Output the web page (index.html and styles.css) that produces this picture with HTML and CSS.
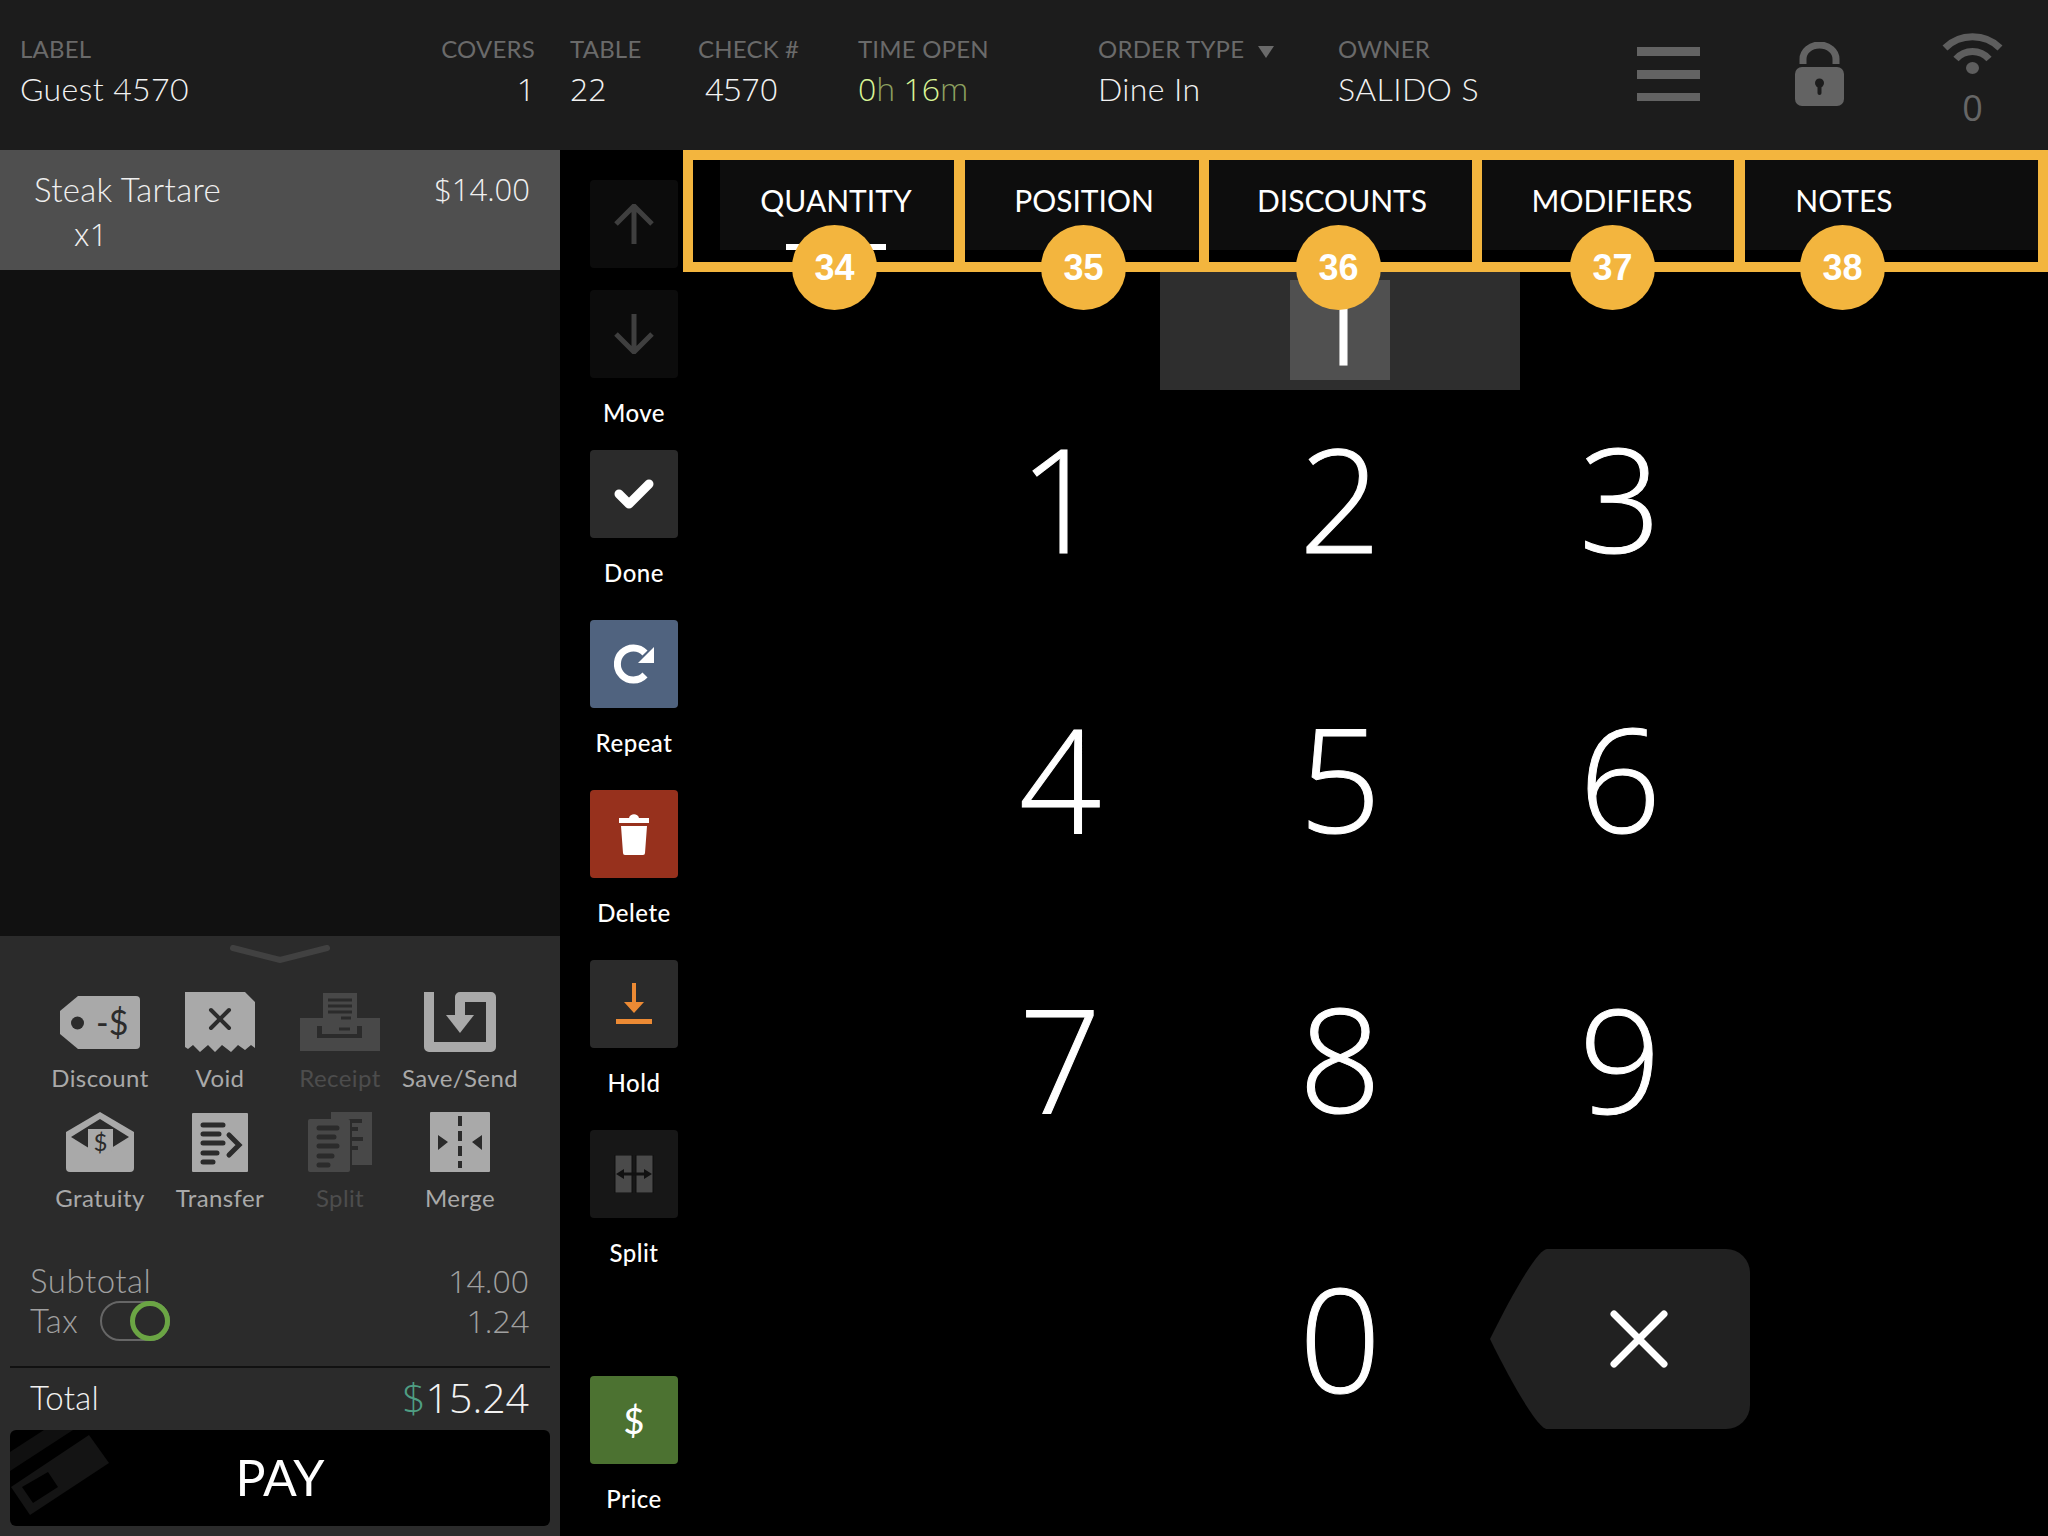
FILE: index.html
```html
<!DOCTYPE html>
<html lang="en">
<head>
<meta charset="utf-8">
<title>Order</title>
<link rel="stylesheet" href="styles.css">
</head>
<body>
<div class="app">
  <header class="top">
    <div class="col col-label"><div class="cap">LABEL</div><div class="val">Guest 4570</div></div>
    <div class="col col-covers"><div class="cap">COVERS</div><div class="val num">1</div></div>
    <div class="col col-table"><div class="cap">TABLE</div><div class="val num">22</div></div>
    <div class="col col-check"><div class="cap">CHECK #</div><div class="val num val-check">4570</div></div>
    <div class="col col-time"><div class="cap">TIME OPEN</div><div class="val num"><span class="lime">0</span><span class="olive">h</span> <span class="lime">16</span><span class="olive">m</span></div></div>
    <div class="col col-order"><div class="cap">ORDER TYPE<svg class="tri" width="16" height="12" viewBox="0 0 16 12"><path d="M0 0H16L8 12Z"/></svg></div><div class="val">Dine In</div></div>
    <div class="col col-owner"><div class="cap">OWNER</div><div class="val">SALIDO S</div></div>
    <svg class="ico-menu" width="63" height="54" viewBox="0 0 63 54"><path fill="#636363" d="M0 0H63V9H0ZM0 23H63V32H0ZM0 46H63V54H0Z"/></svg>
    <svg class="ico-lock" width="49" height="64" viewBox="0 0 49 64"><path d="M8 22V17a16.500 14 0 0 1 33 0V22" fill="none" stroke="#636363" stroke-width="7"/><rect y="25" width="49" height="39" rx="7" fill="#636363"/><circle cx="24.500" cy="41" r="4.500" fill="#1c1c1c"/><rect x="22.500" y="42" width="4" height="11" rx="2" fill="#1c1c1c"/></svg>
    <div class="wifi">
      <svg width="61" height="42" viewBox="0 0 61 42"><g fill="none" stroke="#5e5e5e" stroke-width="7"><path d="M3 15C18 0 43 0 58 15"/><path d="M14 26C23 16 38 16 47 26"/></g><ellipse cx="30.500" cy="35" rx="6.500" ry="6" fill="#5e5e5e"/></svg>
      <div class="wifi-n">0</div>
    </div>
  </header>

  <div class="main">
    <aside class="left">
      <div class="item">
        <div class="item-row"><span>Steak Tartare</span><span class="num item-price">$14.00</span></div>
        <div class="item-qty num">x1</div>
      </div>
      <div class="list"></div>
      <div class="panel">
        <svg class="chev" width="100" height="18" viewBox="0 0 100 18"><path d="M3 3L50 15L97 3" fill="none" stroke="#414141" stroke-width="6" stroke-linecap="round"/></svg>
        <div class="tools">
          <div class="tool">
            <div class="tool-ico"><svg width="80" height="53" viewBox="0 0 80 53"><path fill="#a9a9a9" d="M18 0H76a4 4 0 0 1 4 4V49a4 4 0 0 1-4 4H18L0 38V15Z"/><circle cx="17.500" cy="27" r="6.500" fill="#2b2b2b"/><text class="tag-t" x="36" y="39">-$</text></svg></div>
            <div class="tool-l">Discount</div>
          </div>
          <div class="tool">
            <div class="tool-ico"><svg width="70" height="60" viewBox="0 0 70 60"><path fill="#a9a9a9" d="M0 0H60L70 10V56L66 53L60 58L53 53L46 60L37 53L30 60L23 53L15 60L8 53L3 57L0 55Z"/><path d="M26 18L44 36M44 18L26 36" stroke="#2b2b2b" stroke-width="4" stroke-linecap="round"/></svg></div>
            <div class="tool-l">Void</div>
          </div>
          <div class="tool">
            <div class="tool-ico"><svg width="80" height="58" viewBox="0 0 80 58"><path fill="#484848" d="M23 0H57V25H80V58H0V25H23Z"/><path d="M28 7H52M28 13H52M28 19H52" stroke="#2b2b2b" stroke-width="3"/><path d="M41 25H51" stroke="#2b2b2b" stroke-width="3"/><path d="M17 33V45H62V33H57V41H22V33Z" fill="#2b2b2b"/><path d="M39 36H50" stroke="#2b2b2b" stroke-width="3"/></svg></div>
            <div class="tool-l tool-off">Receipt</div>
          </div>
          <div class="tool">
            <div class="tool-ico"><svg width="72" height="60" viewBox="0 0 72 60"><path d="M5 0V55H67V5H36V26" fill="none" stroke="#a9a9a9" stroke-width="10" stroke-linejoin="round"/><path fill="#a9a9a9" d="M22 23H50L36 41Z"/></svg></div>
            <div class="tool-l">Save/Send</div>
          </div>
          <div class="tool">
            <div class="tool-ico"><svg width="68" height="60" viewBox="0 0 68 60"><path fill="#a9a9a9" d="M34 0L68 20V56a4 4 0 0 1-4 4H4a4 4 0 0 1-4-4V20Z"/><path fill="#2b2b2b" d="M5 25L34 7L63 25L34 43Z"/><path fill="#a9a9a9" d="M22 17H47V38L34.500 45L22 38Z"/><text class="env-t" x="34.500" y="39">$</text></svg></div>
            <div class="tool-l">Gratuity</div>
          </div>
          <div class="tool">
            <div class="tool-ico"><svg width="56" height="59" viewBox="0 0 56 59"><rect width="56" height="59" rx="1" fill="#a9a9a9"/><path d="M11 12H31M11 21H27M11 30H31M11 40H25M11 49H21" stroke="#2b2b2b" stroke-width="5" stroke-linecap="round"/><path d="M37 22L47 32L37 42" fill="none" stroke="#2b2b2b" stroke-width="5" stroke-linecap="round"/></svg></div>
            <div class="tool-l">Transfer</div>
          </div>
          <div class="tool">
            <div class="tool-ico"><svg width="64" height="60" viewBox="0 0 64 60"><path fill="#484848" d="M23 0H64V53H44V7H23Z"/><path d="M44 9H54M44 17H50M44 27H55M44 36H50" stroke="#2b2b2b" stroke-width="4"/><rect y="7" width="42" height="53" rx="2" fill="#484848"/><path d="M11 16H29M11 25H26M11 34H29M11 44H24M11 53H20" stroke="#2b2b2b" stroke-width="5" stroke-linecap="round"/></svg></div>
            <div class="tool-l tool-off">Split</div>
          </div>
          <div class="tool">
            <div class="tool-ico"><svg width="60" height="60" viewBox="0 0 60 60"><rect width="60" height="60" rx="1" fill="#a9a9a9"/><path d="M30 4V56" stroke="#2b2b2b" stroke-width="4" stroke-dasharray="10 5"/><path fill="#2b2b2b" d="M8 23L18 30L8 38ZM52 23L42 30L52 38Z"/></svg></div>
            <div class="tool-l">Merge</div>
          </div>
        </div>
        <div class="sums">
          <div class="sum"><span>Subtotal</span><span class="num">14.00</span></div>
          <div class="sum"><span class="tax">Tax<span class="toggle"><span class="knob"></span></span></span><span class="num">1.24</span></div>
        </div>
        <div class="rule"></div>
        <div class="total"><span>Total</span><span class="grand num"><span class="usd">$</span>15.24</span></div>
        <button class="pay">
          <svg class="card" width="120" height="96" viewBox="0 0 120 96"><path fill="#101010" d="M0 22L34 0H63L0 41Z"/><path fill="#141414" d="M79 5L99 33L20 85L1 57Z"/><path fill="#000" d="M38 42L48 57L23 73L12 57Z"/></svg>
          <span class="pay-t">PAY</span>
        </button>
      </div>
    </aside>

    <nav class="actions">
      <div class="act"><div class="btn btn-dim"><svg width="40" height="40" viewBox="0 0 40 40"><path d="M20 40V2M2 20L20 2L38 20" fill="none" stroke="#3f3f3f" stroke-width="5"/></svg></div></div>
      <div class="act act-tight"><div class="btn btn-dim"><svg width="40" height="40" viewBox="0 0 40 40"><path d="M20 0V38M2 20L20 38L38 20" fill="none" stroke="#3f3f3f" stroke-width="5"/></svg></div><div class="act-l">Move</div></div>
      <div class="act act-tight"><div class="btn btn-dark"><svg width="40" height="32" viewBox="0 0 40 32"><path d="M5 16L15 26L35 6" fill="none" stroke="#fff" stroke-width="9" stroke-linecap="round" stroke-linejoin="round"/></svg></div><div class="act-l">Done</div></div>
      <div class="act"><div class="btn btn-blue"><svg width="40" height="40" viewBox="0 0 40 40"><path d="M31 9A16 16 0 1 0 31 31" fill="none" stroke="#fff" stroke-width="7"/><path fill="#fff" d="M40 3V19H24Z"/></svg></div><div class="act-l">Repeat</div></div>
      <div class="act"><div class="btn btn-red"><svg width="30" height="42" viewBox="0 0 30 42"><path fill="#fff" d="M0 5H10C11 0 19 0 20 5H30V10H0ZM2 13H28L26 40a2 2 0 0 1-2 2H6a2 2 0 0 1-2-2Z"/></svg></div><div class="act-l">Delete</div></div>
      <div class="act"><div class="btn btn-dark"><svg width="36" height="42" viewBox="0 0 36 42"><path fill="#ec8a34" d="M16 0H20V19H28L18 30L8 19H16ZM0 36H36V41H0Z"/></svg></div><div class="act-l">Hold</div></div>
      <div class="act"><div class="btn btn-split"><svg width="40" height="38" viewBox="0 0 40 38"><path fill="#4a4a4a" stroke="#0e0e0e" d="M1 0H18V38H1ZM22 0H39V38H22Z"/><path d="M7 19H33" stroke="#111" stroke-width="3"/><path fill="#111" d="M2 19L10 14V24ZM38 19L30 14V24Z"/></svg></div><div class="act-l">Split</div></div>
      <div class="act act-end"><div class="btn btn-green"><span class="usd-big">$</span></div><div class="act-l">Price</div></div>
    </nav>

    <section class="work">
      <div class="tabs">
        <div class="tab tab-q">QUANTITY<span class="under"></span></div>
        <div class="tab tab-p">POSITION</div>
        <div class="tab tab-d">DISCOUNTS</div>
        <div class="tab tab-m">MODIFIERS</div>
        <div class="tab tab-n">NOTES</div>
      </div>
      <div class="display"><div class="display-in"><span class="display-n">1</span></div></div>
      <div class="keys">
        <div class="key">1</div><div class="key">2</div><div class="key">3</div>
        <div class="key">4</div><div class="key">5</div><div class="key">6</div>
        <div class="key">7</div><div class="key">8</div><div class="key">9</div>
        <div class="key"></div><div class="key">0</div>
        <div class="key key-back"><svg width="260" height="180" viewBox="0 0 260 180"><path fill="#212121" d="M57 0H236a24 24 0 0 1 24 24V156a24 24 0 0 1-24 24H57C48 180 22 135 0 90C22 45 48 0 57 0Z"/><path d="M124 65L174 115M174 65L124 115" stroke="#fff" stroke-width="7" stroke-linecap="round"/></svg></div>
      </div>
      <div class="frame f1"></div><div class="frame f2"></div><div class="frame f3"></div><div class="frame f4"></div><div class="frame f5"></div>
      <div class="badge b1">34</div><div class="badge b2">35</div><div class="badge b3">36</div><div class="badge b4">37</div><div class="badge b5">38</div>
    </section>
  </div>
</div>
</body>
</html>
```

FILE: styles.css
```css
* { box-sizing: border-box; }
html, body { margin: 0; padding: 0; background: #000; }
body { font-family: "Lato", "Liberation Sans", sans-serif; color: #fff; }
.app { width: 2048px; height: 1536px; display: flex; flex-direction: column; overflow: hidden; }
.num { font-family: "Open Sans", "Liberation Sans", sans-serif; }

/* header */
.top { height: 150px; background: #1c1c1c; display: flex; align-items: flex-start; padding: 33px 0 0 20px; flex: none; }
.col { flex: none; }
.cap { margin-top: 1px; height: 30px; line-height: 30px; font-size: 24px; letter-spacing: 0.2px; color: #6a6a6a; white-space: nowrap; }
.val { height: 50px; line-height: 50px; font-size: 32px; font-weight: 300; letter-spacing: 0.4px; color: #f2f2f2; white-space: nowrap; }
.val.num { letter-spacing: 0; }
.col-label { width: 420px; }
.col-covers { width: 95px; margin-right: 35px; text-align: right; }
.col-table { width: 128px; }
.col-check { width: 160px; }
.val-check { padding-left: 7px; }
.col-time { width: 240px; }
.col-order { width: 240px; }
.col-owner { width: 299px; }
.lime { color: #d9f596; }
.olive { color: #8ca060; }
.tri { margin-left: 14px; fill: #6a6a6a; }
.ico-menu { flex: none; margin-top: 14px; margin-right: 95px; }
.ico-lock { flex: none; margin-top: 9px; margin-right: 98px; }
.wifi { flex: none; width: 61px; text-align: center; }
.wifi-n { margin-top: 11px; font-family: "Open Sans", sans-serif; font-size: 36px; line-height: 44px; color: #666; }
.wifi svg { display: block; }

/* layout */
.main { flex: 1; display: flex; min-height: 0; }
.left { width: 560px; flex: none; display: flex; flex-direction: column; background: #111; }
.item { height: 120px; flex: none; background: #4f4f4f; padding: 19px 30px 0 34px; font-weight: 300; font-size: 33px; letter-spacing: 0.3px; color: #f0f0f0; }
.item-row { display: flex; justify-content: space-between; line-height: 40px; }
.item-price { font-size: 31px; letter-spacing: 0; }
.item-qty { padding-left: 40px; margin-top: 5px; line-height: 40px; font-size: 31px; }
.list { flex: 1; }
.panel { height: 600px; flex: none; background: #2b2b2b; padding: 9px 10px 0; }
.chev { display: block; margin: 0 auto; }
.tools { display: grid; grid-template-columns: repeat(4, 120px); row-gap: 19px; margin: 29px 0 0 30px; }
.tool { display: flex; flex-direction: column; align-items: center; }
.tool-ico { height: 60px; display: flex; align-items: center; justify-content: center; }
.tool-ico svg { display: block; }
.tool-l { margin-top: 11px; font-size: 24px; line-height: 30px; letter-spacing: 0.4px; color: #a9a9a9; white-space: nowrap; }
.tool-off { color: #4d4d4d; }
.tag-t { font-family: "Lato", sans-serif; font-weight: 400; font-size: 34px; fill: #2b2b2b; }
.env-t { font-family: "Lato", sans-serif; font-size: 24px; fill: #2b2b2b; text-anchor: middle; }
.sums { margin-top: 47px; padding: 0 21px 0 20px; font-size: 33px; letter-spacing: 0.5px; font-weight: 300; color: #a0a0a0; }
.sums .num { font-size: 32px; letter-spacing: 0; }
.sum { display: flex; justify-content: space-between; align-items: center; height: 40px; }
.tax { display: flex; align-items: center; }
.toggle { position: relative; top: 1px; width: 70px; height: 40px; margin-left: 22px; border: 2px solid #666; border-radius: 20px; display: block; }
.knob { position: absolute; right: -2px; top: -2px; width: 40px; height: 40px; border: 5px solid #6ba544; border-radius: 50%; background: #2b2b2b; }
.rule { height: 2px; background: #111; margin-top: 26px; }
.total { display: flex; justify-content: space-between; align-items: center; height: 62px; padding: 0 21px 4px 20px; font-size: 33px; letter-spacing: 0.3px; font-weight: 300; color: #f2f2f2; }
.grand { font-size: 41px; letter-spacing: 0; }
.usd { color: #4f9e83; }
.pay { position: relative; display: flex; align-items: center; justify-content: center; width: 540px; height: 96px; background: #000; border: 0; border-radius: 6px; overflow: hidden; padding: 0 0 2px; color: #fff; font-family: inherit; }
.card { position: absolute; left: 0; top: 0; }
.pay-t { position: relative; font-size: 50px; font-weight: 400; }

/* action column */
.actions { width: 123px; flex: none; background: #000; display: flex; flex-direction: column; padding: 30px 0 22px 30px; }
.act { margin-bottom: 32px; }
.act:first-child { margin-bottom: 22px; }
.act-tight { margin-bottom: 22px; }
.act:nth-child(3) { margin-bottom: 32px; }
.act:nth-last-child(2) { margin-bottom: 0; }
.act-end { margin-top: auto; margin-bottom: 0; }
.btn { width: 88px; height: 88px; border-radius: 4px; display: flex; align-items: center; justify-content: center; }
.btn svg { display: block; }
.btn-dim { background: #0c0c0c; }
.btn-dark { background: #2b2b2b; }
.btn-blue { background: #50637f; }
.btn-red { background: #97311d; }
.btn-split { background: #171717; }
.btn-green { background: #4c7231; }
.act-l { width: 88px; margin-top: 20px; height: 30px; line-height: 30px; text-align: center; font-size: 24px; font-weight: 500; white-space: nowrap; letter-spacing: 0.5px; }
.usd-big { font-size: 36px; font-weight: 500; }

/* work area */
.work { position: relative; flex: 1; background: #000; padding-top: 10px; min-width: 0; }
.tabs { display: flex; height: 90px; margin: 0 10px 0 37px; background: #0d0d0d; }
.tab { position: relative; height: 90px; line-height: 80px; text-align: center; font-size: 30px; font-weight: 400; color: #fff; white-space: nowrap; flex: none; }
.tab-q { width: 232px; }
.tab-p { width: 264px; }
.tab-d { width: 252px; }
.tab-m { width: 288px; }
.tab-n { width: 176px; }
.under { position: absolute; left: 66px; bottom: 0; width: 100px; height: 6px; background: #fff; }
.display { width: 360px; height: 120px; margin: 20px 0 0 477px; background: #2e2e2e; display: flex; justify-content: center; align-items: flex-end; padding-bottom: 10px; }
.display-in { width: 100px; height: 100px; background: #505050; display: flex; justify-content: center; align-items: flex-start; overflow: visible; }
.display-n { font-family: "Open Sans", sans-serif; font-size: 144px; line-height: 100px; font-weight: 300; -webkit-text-stroke: 1px #fff; position: relative; top: -21px; }
.keys { position: relative; width: 840px; margin: -33px 0 0 237px; display: grid; grid-template-columns: repeat(3, 280px); grid-auto-rows: 280px; }
.key { display: flex; align-items: center; justify-content: center; font-family: "Open Sans", sans-serif; font-size: 144px; font-weight: 300; line-height: 1; -webkit-text-stroke: 1px #fff; }
.key-back { position: relative; top: 2px; }
.key-back svg { display: block; }

/* annotation overlay */
.frame { position: absolute; top: 0; height: 122px; border: 10px solid #f3b53e; }
.f1 { left: 0; width: 281px; }
.f2 { left: 272px; width: 254px; }
.f3 { left: 516px; width: 283px; }
.f4 { left: 789px; width: 272px; }
.f5 { left: 1052px; width: 313px; }
.badge { position: absolute; top: 75px; width: 85px; height: 85px; border-radius: 50%; background: #f3b53e; color: #fff; font-family: "Liberation Sans", sans-serif; font-weight: 700; font-size: 36px; line-height: 85px; text-align: center; }
.b1 { left: 109px; }
.b2 { left: 358px; }
.b3 { left: 613px; }
.b4 { left: 887px; }
.b5 { left: 1117px; }
```
